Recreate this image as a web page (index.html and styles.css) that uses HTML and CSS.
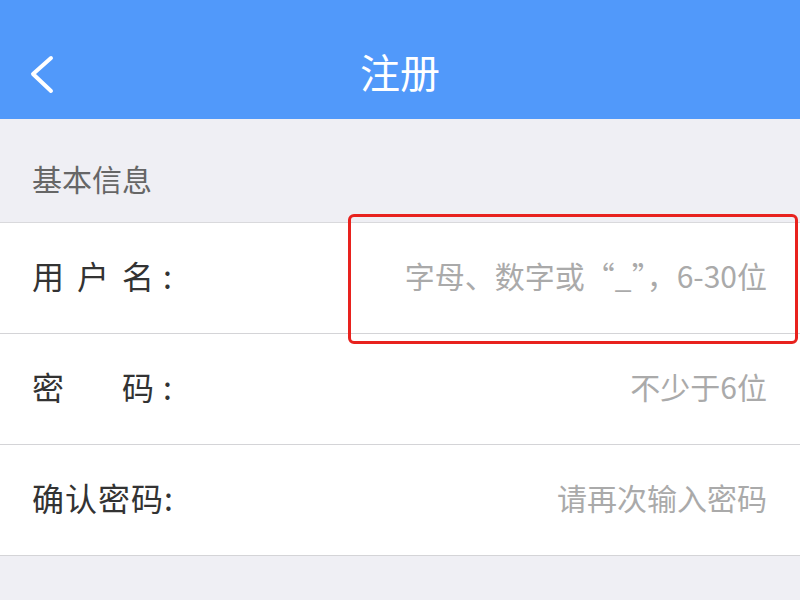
FILE: index.html
```html
<!DOCTYPE html>
<html lang="zh-CN">
<head>
<meta charset="utf-8">
<title>注册</title>
<link rel="stylesheet" href="styles.css">
</head>
<body>
<div class="page">
  <header class="navbar">
    <span class="back">
      <svg width="30" height="40" viewBox="0 0 30 40"><polyline points="21,4 3,20 21,37" fill="none" stroke="#fff" stroke-width="4" stroke-linecap="round" stroke-linejoin="round"/></svg>
    </span>
    <h1 class="title">注册</h1>
  </header>
  <div class="section-title">基本信息</div>
  <div class="form">
    <div class="row">
      <div class="label"><span>用</span><span>户</span><span>名</span><span class="colon">:</span></div>
      <div class="hint">字母、数字或“_”，6-30位</div>
    </div>
    <div class="row">
      <div class="label"><span>密</span><span class="c3">码</span><span class="colon">:</span></div>
      <div class="hint">不少于6位</div>
    </div>
    <div class="row">
      <div class="label wide"><span>确认密码:</span></div>
      <div class="hint">请再次输入密码</div>
    </div>
  </div>
  <div class="highlight"></div>
</div>
</body>
</html>
```
FILE: styles.css
```css
* { box-sizing: border-box; margin: 0; padding: 0; }
html, body { width: 800px; height: 600px; overflow: hidden; }
body {
  background: #efeff4;
  font-family: "Noto Sans CJK SC", "Noto Sans", sans-serif;
}
.page { position: relative; width: 800px; height: 600px; }
.navbar {
  height: 119px;
  background: #5199fa;
  display: flex;
  align-items: center;
  justify-content: center;
  position: relative;
  padding-top: 22px;
}
.back {
  position: absolute;
  left: 30px;
  top: 54px;
  width: 30px;
  height: 40px;
  display: flex;
}
.title {
  color: #fff;
  font-size: 40px;
  font-weight: 400;
  line-height: 1;
}
.section-title {
  padding: 38px 32px 23px;
  font-size: 30px;
  line-height: 42px;
  color: #666;
}
.form {
  background: #fff;
  border-top: 1px solid #d9d9dc;
}
.row {
  height: 111px;
  border-bottom: 1px solid #d4d4d7;
  display: flex;
  align-items: center;
  justify-content: space-between;
  padding: 0 33px 6px 32px;
}
.label {
  display: grid;
  grid-template-columns: 45px 45px 41px 12px;
  font-size: 32px;
  color: #333;
  line-height: 1;
  white-space: nowrap;
}
.label .c3 { grid-column: 3; }
.label .colon { grid-column: 4; }
.label.wide {
  display: block;
  letter-spacing: 1px;
}
.hint {
  font-size: 30px;
  color: #aaa;
  line-height: 1;
}
.highlight {
  position: absolute;
  left: 348px;
  top: 214px;
  width: 450px;
  height: 130px;
  border: 3px solid #e8221e;
  border-radius: 6px;
}
```
